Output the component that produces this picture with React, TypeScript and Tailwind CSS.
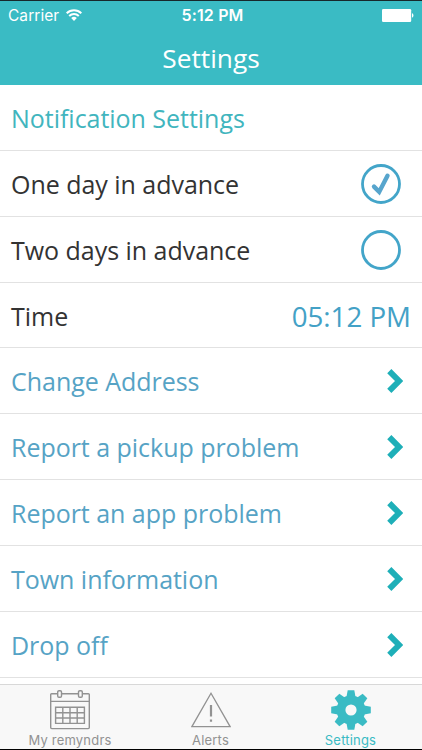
import { type ReactNode } from "react";
import clsx from "clsx";

const links = [
  "Change Address",
  "Report a pickup problem",
  "Report an app problem",
  "Town information",
  "Drop off",
];

const gearAngles = [0, 45, 90, 135, 180, 225, 270, 315];

function WifiIcon() {
  return (
    <svg className="ml-[7px] h-3 w-4" viewBox="0 0 16 12" fill="none" stroke="white" strokeWidth="2" aria-hidden="true">
      <path d="M0.7 4.2a10.4 10.4 0 0 1 14.6 0" />
      <path d="M3.2 7a6.8 6.8 0 0 1 9.6 0" />
      <path d="M5.2 9.1a4 4 0 0 1 5.6 0L8 12Z" fill="white" stroke="none" />
    </svg>
  );
}

function BatteryIcon() {
  return (
    <svg className="h-[13px] w-8" viewBox="0 0 32 13" fill="white" aria-hidden="true">
      <rect width="29.2" height="13" rx="1.3" />
      <path d="M30 4.3c1.9.5 1.9 3.9 0 4.4Z" />
    </svg>
  );
}

function CalendarIcon() {
  return (
    <svg className="h-10 w-10" viewBox="0 0 40 40" fill="none" stroke="#929292" strokeWidth="1.4" aria-hidden="true">
      <path d="M7.5 3.7H1.6Q.7 3.7.7 4.6V37.5Q.7 38.6 1.8 38.6H38.2Q39.3 38.6 39.3 37.5V4.6Q39.3 3.7 38.4 3.7H32.5M11.5 3.7H28.3M.7 11.4H39.3" />
      <rect x="7.7" y=".7" width="3.8" height="6.5" rx="1.3" />
      <rect x="28.5" y=".7" width="3.8" height="6.5" rx="1.3" />
      <path d="M5.6 17.3H34.4V33.4H5.6ZM5.6 22.7H34.4M5.6 28H34.4M12.8 17.3V33.4M20 17.3V33.4M27.2 17.3V33.4" />
    </svg>
  );
}

function AlertIcon() {
  return (
    <svg className="h-10 w-10" viewBox="0 0 40 40" fill="none" stroke="#929292" strokeWidth="1.3" aria-hidden="true">
      <path d="M20 3.2 39.1 36.6H.9Z" />
      <path d="M20 15V26.5M20 29.5V31.8" strokeWidth="2.2" />
    </svg>
  );
}

function GearIcon() {
  return (
    <svg className="h-10 w-10" viewBox="-20 -20 40 40" fill="#3abbc4" aria-hidden="true">
      <circle r="10" fill="none" stroke="#3abbc4" strokeWidth="8.8" />
      {gearAngles.map((angle) => (
        <path key={angle} d="M-4.7-12-3.3-19.8H3.3L4.7-12Z" transform={`rotate(${angle})`} />
      ))}
    </svg>
  );
}

function RadioMark({ checked = false }: { checked?: boolean }) {
  return (
    <svg className="mr-[10px] h-10 w-10" viewBox="0 0 40 40" fill="none" aria-hidden="true">
      <circle cx="20" cy="20" r="18.5" stroke="#43a5c9" strokeWidth="2.8" />
      {checked && (
        <path d="m13 22.6 5.2 5.3 8.3-16.1" stroke="#57a5cd" strokeWidth="4.4" strokeLinecap="round" />
      )}
    </svg>
  );
}

function Chevron() {
  return (
    <svg className="mr-[8px] h-6 w-4" viewBox="0 0 16 24" fill="none" aria-hidden="true">
      <path d="m2.3 2.2 9.8 9.8-9.8 9.8" stroke="#1eafb8" strokeWidth="5.9" />
    </svg>
  );
}

function Row({ label, color = "text-[#333333]", children }: { label: string; color?: string; children?: ReactNode }) {
  return (
    <div className="flex h-[65.87px] shrink-0 items-center justify-between border-b border-[#e2e2e2] pt-px pr-[11px] pl-[11px]">
      <span className={clsx("text-[25px] leading-8 tracking-[-0.03px] whitespace-nowrap", color)}>{label}</span>
      {children}
    </div>
  );
}

function Tab({ label, active = false, children }: { label: string; active?: boolean; children: ReactNode }) {
  return (
    <div className={clsx("flex flex-col items-center pt-[5px]", active ? "text-[#3abbc4]" : "text-[#929292]")}>
      {children}
      <span className="mt-[2px] font-['Inter',sans-serif] text-[13px] leading-4 tracking-[0.2px]">{label}</span>
    </div>
  );
}

export default function App() {
  return (
    <div className="flex h-[750px] w-[422px] flex-col overflow-hidden border-t border-b border-t-[#17282b] border-b-black bg-white font-['Open_Sans',sans-serif]">
      <header className="h-[84px] shrink-0 bg-[#3abbc4] text-white">
        <div className="grid h-7 grid-cols-3 items-center px-2 font-['Inter',sans-serif] text-base">
          <div className="flex items-center">
            <span className="pt-px text-[15.5px] tracking-[0.05px]">Carrier</span>
            <WifiIcon />
          </div>
          <span className="pl-[3px] text-center font-semibold tracking-[0.15px] whitespace-nowrap">5:12 PM</span>
          <div className="flex justify-end">
            <BatteryIcon />
          </div>
        </div>
        <h1 className="pt-[11px] text-center text-[26.3px] leading-9">Settings</h1>
      </header>

      <main className="flex min-h-0 flex-1 flex-col overflow-hidden">
        <Row label="Notification Settings" color="text-[#41b5be]" />
        <Row label="One day in advance">
          <RadioMark checked />
        </Row>
        <Row label="Two days in advance">
          <RadioMark />
        </Row>
        <Row label="Time">
          <span className="text-[27.7px] leading-8 text-[#43a1c6]">05:12 PM</span>
        </Row>
        {links.map((label) => (
          <Row key={label} label={label} color="text-[#56a3c5]">
            <Chevron />
          </Row>
        ))}
      </main>

      <nav className="grid h-[65px] shrink-0 grid-cols-[140px_141px_139px] border-t border-[#d8d8d8] bg-[#f8f8f8]">
        <Tab label="My remyndrs">
          <CalendarIcon />
        </Tab>
        <Tab label="Alerts">
          <AlertIcon />
        </Tab>
        <Tab label="Settings" active>
          <GearIcon />
        </Tab>
      </nav>
    </div>
  );
}
